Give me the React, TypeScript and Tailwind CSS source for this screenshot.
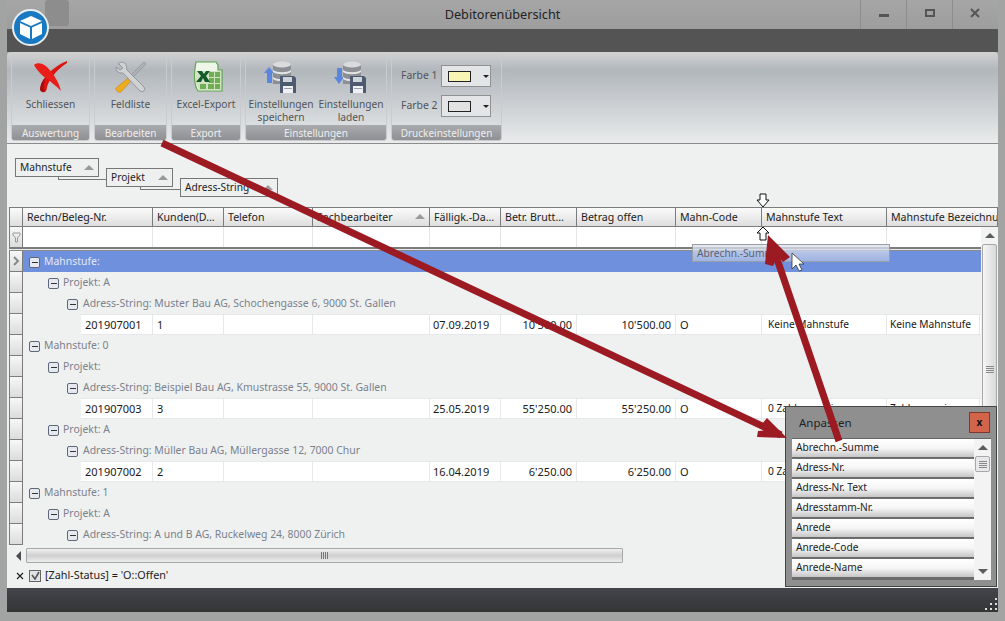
import React from "react";

const cols = [
  { label: "Rechn/Beleg-Nr.", w: "w-[130px]" },
  { label: "Kunden(D…", w: "w-[71px]" },
  { label: "Telefon", w: "w-[89px]" },
  { label: "Sachbearbeiter", w: "w-[117px]", sort: true },
  { label: "Fälligk.-Da…", w: "w-[71px]" },
  { label: "Betr. Brutt…", w: "w-[76px]" },
  { label: "Betrag offen", w: "w-[99px]" },
  { label: "Mahn-Code", w: "w-[86px]" },
  { label: "Mahnstufe Text", w: "w-[125px]" },
  { label: "Mahnstufe Bezeichnung", w: "w-[111px]" },
];

const fields = ["Abrechn.-Summe", "Adress-Nr.", "Adress-Nr. Text", "Adresstamm-Nr.", "Anrede", "Anrede-Code", "Anrede-Name"];

type Row =
  | { t: "group"; level: 0 | 1 | 2; text: string; active?: boolean }
  | { t: "data"; cells: string[] };

const rows: Row[] = [
  { t: "group", level: 0, text: "Mahnstufe:", active: true },
  { t: "group", level: 1, text: "Projekt: A" },
  { t: "group", level: 2, text: "Adress-String: Muster Bau AG, Schochengasse 6, 9000 St. Gallen" },
  { t: "data", cells: ["201907001", "1", "07.09.2019", "10'500.00", "10'500.00", "O", "Keine Mahnstufe", "Keine Mahnstufe"] },
  { t: "group", level: 0, text: "Mahnstufe: 0" },
  { t: "group", level: 1, text: "Projekt:" },
  { t: "group", level: 2, text: "Adress-String: Beispiel Bau AG, Kmustrasse 55, 9000 St. Gallen" },
  { t: "data", cells: ["201907003", "3", "25.05.2019", "55'250.00", "55'250.00", "O", "0 Zahlungserinnerung", "Zahlungserinnerung"] },
  { t: "group", level: 1, text: "Projekt: A" },
  { t: "group", level: 2, text: "Adress-String: Müller Bau AG, Müllergasse 12, 7000 Chur" },
  { t: "data", cells: ["201907002", "2", "16.04.2019", "6'250.00", "6'250.00", "O", "0 Zahlungserinnerung", "Zahlungserinnerung"] },
  { t: "group", level: 0, text: "Mahnstufe: 1" },
  { t: "group", level: 1, text: "Projekt: A" },
  { t: "group", level: 2, text: "Adress-String: A und B AG, Ruckelweg 24, 8000 Zürich" },
];

const CloseIcon = () => (
  <svg width="34" height="32" viewBox="0 0 34 32">
    <path d="M33 0 C25 3 17 9 12 15 C7 21 5 28 8 31 C11 32 13 30 13 26 C15 19 22 9 33 2 Z" fill="#dc1410" />
    <path d="M0 4 C3 1 9 2 13 6 C19 12 25 21 27 30 C22 25 15 19 9 15 C5 11 2 8 0 4 Z" fill="#ea1e18" />
    <path d="M6 29 C6 24 8 20 11 17 C10 22 9 27 11 31 C9 31 7 31 6 29 Z" fill="#a50d0d" />
  </svg>
);

const ToolsIcon = () => (
  <svg width="32" height="32" viewBox="0 0 32 32">
    <path d="M29 1 L31 3 L14 20 L12 18 Z" fill="#aeb1b5" stroke="#7d8186" strokeWidth="0.5" />
    <path d="M13 17 L16 20 L6 31 C4 32 0 30 1 27 Z" fill="#eeab22" stroke="#bd8014" strokeWidth="0.5" />
    <path d="M3 3 C6 0 10 1 11 4 C12 6 11 7 12 9 L29 26 C31 29 28 32 25 30 L8 12 C6 12 3 12 2 10 C1 8 1 7 1 6 L5 9 L8 7 L4 3 Z" fill="#d0d2d4" stroke="#888c90" strokeWidth="0.8" />
  </svg>
);

const ExcelIcon = () => (
  <svg width="33" height="32" viewBox="0 0 33 32">
    <path d="M6 1 H26 L28 4 V9 H32 V30 H8 C5 26 3 16 6 1 Z" fill="#eef6e8" stroke="#5da24f" strokeWidth="1.2" />
    <path d="M18 10 H31 V29 H9 C8 27 7 24 6 21 V10 Z" fill="#cfe3c0" />
    <rect x="19" y="11" width="5" height="5" fill="#6fae55" />
    <rect x="25" y="11" width="5" height="5" fill="#6fae55" />
    <rect x="19" y="17" width="5" height="5" fill="#6fae55" />
    <rect x="25" y="17" width="5" height="5" fill="#6fae55" />
    <rect x="10" y="23" width="6" height="5" fill="#6fae55" />
    <rect x="18" y="23" width="6" height="5" fill="#6fae55" />
    <rect x="25" y="23" width="5" height="5" fill="#6fae55" />
    <path d="M7 10 H12 L14 13 L16 10 H20 L16 15 L20 21 H15 L13 17 L11 21 H6 L11 15 Z" fill="#14592a" />
  </svg>
);

const DbIcon = ({ up }: { up?: boolean }) => (
  <svg width="34" height="33" viewBox="0 0 34 33">
    {up ? (
      <path d="M5 6 L10 12 H8 V22 H3 V12 H0 Z" fill="#5a86e0" />
    ) : (
      <path d="M5 23 L10 16 H8 V7 H3 V16 H0 Z" fill="#5a86e0" />
    )}
    <rect x="9" y="3" width="18" height="20" fill="#8c9095" />
    <ellipse cx="18" cy="3.5" rx="9" ry="3" fill="#d9dbdd" />
    <path d="M9 9 C13 12 23 12 27 9 V11 C23 14 13 14 9 11 Z" fill="#e4e5e7" />
    <path d="M9 16 C13 19 23 19 27 16 V18 C23 21 13 21 9 18 Z" fill="#e4e5e7" />
    <path d="M16 15 H30 L32 17 V32 H16 Z" fill="#4e5a70" />
    <rect x="19" y="16" width="9" height="5" fill="#cfd3da" />
    <rect x="19" y="25" width="10" height="7" fill="#eef0f3" />
    <rect x="20" y="27" width="8" height="1" fill="#9aa0aa" />
  </svg>
);

const Caret = ({ dir = "up" }: { dir?: "up" | "down" | "left" }) => {
  if (dir === "down") return <span className="w-0 h-0 border-x-[5px] border-x-transparent border-t-[5px] border-t-[#5c5c60]" />;
  if (dir === "left") return <span className="w-0 h-0 border-y-[5px] border-y-transparent border-r-[5px] border-r-[#4c4c50]" />;
  return <span className="w-0 h-0 border-x-[5px] border-x-transparent border-b-[5px] border-b-[#5c5c60]" />;
};

const Grip = () => (
  <span className="flex flex-col gap-[1px] w-[8px]">
    <span className="h-px bg-[#888]" />
    <span className="h-px bg-[#888]" />
    <span className="h-px bg-[#888]" />
    <span className="h-px bg-[#888]" />
  </span>
);

const Toggle = () => (
  <span className="w-[11px] h-[11px] shrink-0 rounded-[2px] border border-[#5f6878] bg-[#e6e9f0] flex items-center justify-center">
    <span className="w-[6px] h-px bg-[#333]" />
  </span>
);

const RibbonGroup = ({ caption, className, children }: { caption: string; className: string; children: React.ReactNode }) => (
  <div className={`${className} h-[86px] shrink-0 flex flex-col rounded-[3px] border border-[#c9cbcd] overflow-hidden`}>
    <div className="h-[69px] flex justify-center">{children}</div>
    <div className="h-[15px] bg-gradient-to-b from-[#a9abae] to-[#8e9093] text-[#eeeeee] text-[10px] leading-[17px] text-center">{caption}</div>
  </div>
);

const RibbonBtn = ({ icon, lines, className }: { icon: React.ReactNode; lines: string[]; className: string }) => (
  <div className={`${className} flex flex-col items-center text-[#505458] text-[10.2px] leading-[13px]`}>
    <div className="h-[42px] pt-[5px] flex items-start justify-center">{icon}</div>
    {lines.map((l) => (
      <div key={l} className="whitespace-nowrap">{l}</div>
    ))}
  </div>
);

const ColorPick = ({ label, swatch }: { label: string; swatch: string }) => (
  <div className="flex items-center h-[22px]">
    <span className="w-[40px] text-[#505458] text-[10.4px] whitespace-nowrap">{label}</span>
    <div className="w-[50px] h-[22px] border border-[#8f9193] bg-[#e3e5e7] flex items-center pl-[6px] gap-[12px]">
      <span className={`${swatch} w-[23px] h-[11px] border border-[#222]`} />
      <span className="w-0 h-0 border-x-[3px] border-x-transparent border-t-[3px] border-t-[#222]" />
    </div>
  </div>
);

const Chip = ({ label, className, link }: { label: string; className: string; link?: string }) => (
  <div className={`${className} relative h-[19px] shrink-0 border border-[#777] bg-[#eef0f0] flex items-center justify-between pl-[4px] pr-[4px] text-[#1c1c1c] text-[10.2px]`}>
    {link && <span className={`${link} absolute border-l border-b border-[#777]`} />}
    <span>{label}</span>
    <span className="w-0 h-0 border-x-[5px] border-x-transparent border-b-[5px] border-b-[#9a9a9a]" />
  </div>
);

const IndicatorCell = ({ children }: { children?: React.ReactNode }) => (
  <div className="w-[14px] h-[21px] shrink-0 border border-t-0 border-[#7c7c7c] bg-gradient-to-b from-[#f7f7f7] to-[#dcdcdc] flex items-center justify-center">
    {children}
  </div>
);

const dataW = ["w-[72px]", "w-[71px]", "w-[89px]", "w-[117px]", "w-[71px]", "w-[76px]", "w-[99px]", "w-[86px]", "w-[125px]", "w-[93px]"];
const dataPad = ["px-[4px]", "px-[4px]", "px-[4px]", "px-[4px]", "px-[3px]", "px-[4px]", "px-[4px]", "px-[4px]", "px-[6px]", "px-[3px]"];

const DataRow = ({ cells }: { cells: string[] }) => {
  const all = [cells[0], cells[1], "", "", cells[2], cells[3], cells[4], cells[5], cells[6], cells[7]];
  return (
    <div className="ml-[58px] flex h-[21px] bg-white border-y border-[#e6e8e9] text-[#1a1a1a]">
      {all.map((c, i) => (
        <div
          key={i}
          className={`${dataW[i]} ${dataPad[i]} shrink-0 overflow-hidden whitespace-nowrap border-r border-[#e6e8e9] leading-[19px] ${i === 5 || i === 6 ? "text-right" : ""} ${i >= 8 ? "text-[10.2px]" : ""}`}
        >
          {c}
        </div>
      ))}
    </div>
  );
};

const GroupRow = ({ level, text, active }: { level: 0 | 1 | 2; text: string; active?: boolean }) => {
  const pad = level === 0 ? "pl-[6px]" : level === 1 ? "pl-[25px]" : "pl-[44px]";
  return (
    <div className={`${pad} flex items-center gap-[4px] h-[21px] pt-[1px] text-[10.45px] ${active ? "bg-[#6f90dc] text-[#e3e8f5]" : "text-[#7b818c]"}`}>
      <Toggle />
      <span className={`whitespace-nowrap ${level === 2 ? "ml-[1px]" : ""}`}>{text}</span>
    </div>
  );
};

export default function App() {
  return (
    <div className="relative w-[1005px] h-[621px] overflow-hidden bg-[#a2a3a3] font-['Noto_Sans',sans-serif] text-[11px]">
      {/* window */}
      <div className="ml-[7px] w-[991px] h-[612px] flex flex-col">
        <div className="h-[29px] shrink-0 flex items-center bg-gradient-to-b from-[#a6a6a6] to-[#9d9d9d] relative">
          <div className="absolute left-[38px] top-0 w-[24px] h-[26px] rounded-[3px] bg-[#8d8d8d]" />
          <div className="flex-1 text-center text-[#222] text-[12.7px] pl-[138px]">Debitorenübersicht</div>
          <div className="w-[46px] h-[29px] border-l border-[#8d8d8d] flex items-center justify-center">
            <span className="w-[10px] h-[3px] mt-[2px] bg-[#555]" />
          </div>
          <div className="w-[46px] h-[29px] border-l border-[#8d8d8d] flex items-center justify-center">
            <span className="w-[10px] h-[8px] mb-[3px] border-2 border-[#555]" />
          </div>
          <div className="w-[45px] h-[29px] border-l border-[#8d8d8d] flex items-center justify-center pb-[3px]">
            <svg width="10" height="10" viewBox="0 0 10 10">
              <path d="M1 1 L9 9 M9 1 L1 9" stroke="#555" strokeWidth="2" />
            </svg>
          </div>
          <div className="w-px h-[29px]" />
        </div>
        <div className="h-[23px] shrink-0 bg-[#545454]" />

        {/* ribbon */}
        <div className="h-[92px] shrink-0 flex gap-[4px] pl-[4px] pt-[3px] rounded-t-[4px] border-b border-[#8c8c8c] bg-gradient-to-b from-[#d2d2d2] via-[#b2b7bc] via-20% to-[#e9ebec]">
          <RibbonGroup caption="Auswertung" className="w-[79px]">
            <RibbonBtn className="w-[79px]" icon={<CloseIcon />} lines={["Schliessen"]} />
          </RibbonGroup>
          <RibbonGroup caption="Bearbeiten" className="w-[73px]">
            <RibbonBtn className="w-[73px]" icon={<ToolsIcon />} lines={["Feldliste"]} />
          </RibbonGroup>
          <RibbonGroup caption="Export" className="w-[70px]">
            <RibbonBtn className="w-[70px]" icon={<ExcelIcon />} lines={["Excel-Export"]} />
          </RibbonGroup>
          <RibbonGroup caption="Einstellungen" className="w-[142px]">
            <RibbonBtn className="w-[70px]" icon={<DbIcon up />} lines={["Einstellungen", "speichern"]} />
            <RibbonBtn className="w-[70px]" icon={<DbIcon />} lines={["Einstellungen", "laden"]} />
          </RibbonGroup>
          <RibbonGroup caption="Druckeinstellungen" className="w-[111px]">
            <div className="flex flex-col gap-[8px] pt-[9px] -ml-[1px]">
              <ColorPick label="Farbe 1" swatch="bg-[#f9f5b5]" />
              <ColorPick label="Farbe 2" swatch="bg-[#e2e2e2]" />
            </div>
          </RibbonGroup>
        </div>

        {/* group panel */}
        <div className="h-[63px] shrink-0 bg-[#eff1f1] flex items-start pl-[8px] pt-[14px] gap-[7px]">
          <Chip label="Mahnstufe" className="w-[84px]" />
          <Chip label="Projekt" className="w-[67px] mt-[10px]" link="-left-[49px] top-[7px] w-[49px] h-[4px]" />
          <Chip label="Adress-String" className="w-[98px] mt-[20px]" link="-left-[41px] top-[7px] w-[41px] h-[4px]" />
        </div>

        {/* grid */}
        <div className="flex-1 min-h-0 bg-[#eff1f1] pl-[2px] flex flex-col">
          <div className="h-[20px] shrink-0 flex border-y border-[#7c7c7c] bg-gradient-to-b from-[#fbfbfb] to-[#dedede] text-[#1c1c1c] text-[10.6px] leading-[18px] overflow-hidden">
            <div className="w-[14px] shrink-0 border-x border-[#7c7c7c]" />
            {cols.map((c) => (
              <div key={c.label} className={`${c.w} relative shrink-0 border-r border-[#7c7c7c] px-[4px] whitespace-nowrap overflow-hidden`}>
                {c.label}
                {c.sort && <span className="absolute right-[4px] top-[6px] w-0 h-0 border-x-[5px] border-x-transparent border-b-[5px] border-b-[#9a9a9a]" />}
              </div>
            ))}
          </div>

          <div className="flex-1 min-h-0 flex">
            <div className="w-[972px] shrink-0 flex flex-col">
              <div className="h-[20px] shrink-0 flex bg-white">
                <div className="w-[14px] shrink-0 border-x border-[#7c7c7c] bg-gradient-to-b from-[#f7f7f7] to-[#dcdcdc] flex items-center justify-center">
                  <svg width="9" height="11" viewBox="0 0 9 11">
                    <path d="M1 1 H8 V3 L5.5 6 V10 H3.5 V6 L1 3 Z" fill="none" stroke="#999" />
                  </svg>
                </div>
                {cols.slice(0, 9).map((c) => (
                  <div key={c.label} className={`${c.w} shrink-0 border-r border-[#e3e5e6]`} />
                ))}
              </div>
              <div className="h-[4px] shrink-0 border-t-2 border-[#7c7c7c] border-b border-b-[#8a8a8a] bg-[#e8e9ea]" />
              <div className="flex-1 min-h-0 overflow-hidden">
                {rows.map((r, i) => (
                  <div key={i} className="flex">
                    <IndicatorCell>
                      {i === 0 && (
                        <svg width="8" height="10" viewBox="0 0 8 10">
                          <path d="M2 1 L6 5 L2 9" fill="none" stroke="#888" strokeWidth="2" />
                        </svg>
                      )}
                    </IndicatorCell>
                    <div className="flex-1 min-w-0">
                      {r.t === "group" ? <GroupRow level={r.level} text={r.text} active={r.active} /> : <DataRow cells={r.cells} />}
                    </div>
                  </div>
                ))}
              </div>
            </div>
            <div className="w-[17px] shrink-0 bg-[#f2f3f3] flex flex-col items-center pt-[6px]">
              <Caret />
              <div className="mt-[6px] w-[15px] h-[250px] rounded-[2px] border border-[#a8a8a8] bg-gradient-to-r from-[#f6f6f6] to-[#d9d9d9] flex items-center justify-center">
                <Grip />
              </div>
            </div>
          </div>

          <div className="h-[15px] shrink-0 flex items-center pl-[7px] gap-[3px]">
            <Caret dir="left" />
            <div className="ml-[2px] w-[597px] h-[15px] rounded-[1px] border border-[#a8a8a8] bg-gradient-to-b from-[#f0f0f0] via-[#d0d0d0] to-[#ececec] flex items-center justify-center">
              <span className="flex gap-[1px] h-[7px]">
                <span className="w-px bg-[#777]" />
                <span className="w-px bg-[#777]" />
                <span className="w-px bg-[#777]" />
                <span className="w-px bg-[#777]" />
              </span>
            </div>
          </div>

          <div className="h-[25px] shrink-0 flex items-center pl-[5px] text-[#1c1c1c] text-[10.8px]">
            <svg className="w-[12px] shrink-0" width="12" height="8" viewBox="0 0 12 8">
              <path d="M3 1 L9 7 M9 1 L3 7" stroke="#222" strokeWidth="1.2" />
            </svg>
            <span className="ml-[3px] w-[12px] h-[12px] border border-[#666] bg-[#dfe2e8] flex items-center justify-center">
              <svg width="9" height="9" viewBox="0 0 9 9">
                <path d="M1 4 L4 8 L8 1" fill="none" stroke="#555" strokeWidth="1.6" />
              </svg>
            </span>
            <span className="ml-[4px]">[Zahl-Status] = 'O::Offen'</span>
          </div>
        </div>

        <div className="h-[24px] shrink-0 bg-gradient-to-b from-[#44444c] to-[#333535]" />
      </div>

      {/* logo */}
      <div className="absolute left-[12px] top-[9px] w-[37px] h-[37px] rounded-full bg-[#1878c0] border-2 border-[#e8eef2] flex items-center justify-center">
        <svg width="24" height="25" viewBox="0 0 24 25">
          <path d="M12 1 L23 6 L12 11 L1 6 Z" fill="#fff" />
          <path d="M1 8 L11 12.5 V24 L1 19 Z" fill="#fff" />
          <path d="M23 8 L13 12.5 V24 L23 19 Z" fill="#fff" />
        </svg>
      </div>

      {/* dragged column */}
      <div className="absolute left-[692px] top-[244px] w-[198px] h-[18px] border border-[#9a9ea6] bg-gradient-to-b from-[#dfe3ec]/80 to-[#b4c3e6]/70 text-[#5a6272] text-[10.2px] pl-[4px] leading-[16px]">
        Abrechn.-Summe
      </div>

      {/* dialog */}
      <div className="absolute left-[785px] top-[406px] w-[212px] h-[181px] border border-[#444] bg-[#8f8f8f] flex flex-col">
        <div className="h-[31px] shrink-0 flex items-center justify-between pl-[13px] pr-[6px] text-[#222] text-[11.5px]">
          <span>Anpassen</span>
          <span className="w-[21px] h-[21px] border border-[#7d3a2c] bg-[#d2644c] flex items-center justify-center text-[#111] font-bold text-[10px]">x</span>
        </div>
        <div className="ml-[6px] w-[199px] h-[142px] bg-white border-t border-[#666] flex overflow-hidden">
          <div className="w-[182px] shrink-0">
            {fields.map((f) => (
              <div key={f} className="h-[20px] border-b-2 border-[#6c6c6c] bg-gradient-to-b from-white via-[#f6f6f6] to-[#c6c6c6] pl-[4px] leading-[16px] text-[#1c1c1c] text-[10.2px]">
                {f}
              </div>
            ))}
            <div className="h-[2px] border-b-2 border-[#6c6c6c]" />
          </div>
          <div className="flex-1 bg-[#f3f3f3] flex flex-col items-center pt-[6px]">
            <Caret />
            <div className="mt-[6px] w-[15px] h-[16px] rounded-[2px] border border-[#a8a8a8] bg-[#e8e8ea] flex items-center justify-center">
              <Grip />
            </div>
            <div className="mt-auto mb-[6px] flex"><Caret dir="down" /></div>
          </div>
        </div>
      </div>

      {/* status bar grip */}
      <div className="absolute left-[985px] top-[598px] w-[12px] h-[12px] grid grid-cols-3 gap-[2px] place-items-center">
        <span /><span /><span className="w-[2px] h-[2px] bg-[#ddd]" />
        <span /><span className="w-[2px] h-[2px] bg-[#ddd]" /><span className="w-[2px] h-[2px] bg-[#ddd]" />
        <span className="w-[2px] h-[2px] bg-[#ddd]" /><span className="w-[2px] h-[2px] bg-[#ddd]" /><span className="w-[2px] h-[2px] bg-[#ddd]" />
      </div>

      {/* annotation arrows, column drop markers, cursor */}
      <svg className="absolute left-0 top-0 pointer-events-none" width="1005" height="621" viewBox="0 0 1005 621">
        <path d="M760 194 H766 V200 H769 L763 207 L757 200 H760 Z" fill="#fff" stroke="#111" strokeWidth="1" />
        <path d="M760 240 H766 V233 H769 L763 227 L757 233 H760 Z" fill="#fff" stroke="#111" strokeWidth="1" />
        <path d="M162 143 L781 435" stroke="#9c1a22" strokeWidth="7" fill="none" />
        <path d="M787 438 L757 437 L758 431 L770 430 L762 424 L767 418 Z" fill="#9c1a22" />
        <path d="M839 441 L774 250" stroke="#9c1a22" strokeWidth="7" fill="none" />
        <path d="M768 235 L790 257 L783 262 L778 256 L773 266 L765 264 Z" fill="#9c1a22" />
        <path d="M792 253 V269 L796 265 L799 271 L802 270 L799 264 L804 264 Z" fill="#fff" stroke="#333" strokeWidth="0.8" />
      </svg>
    </div>
  );
}
